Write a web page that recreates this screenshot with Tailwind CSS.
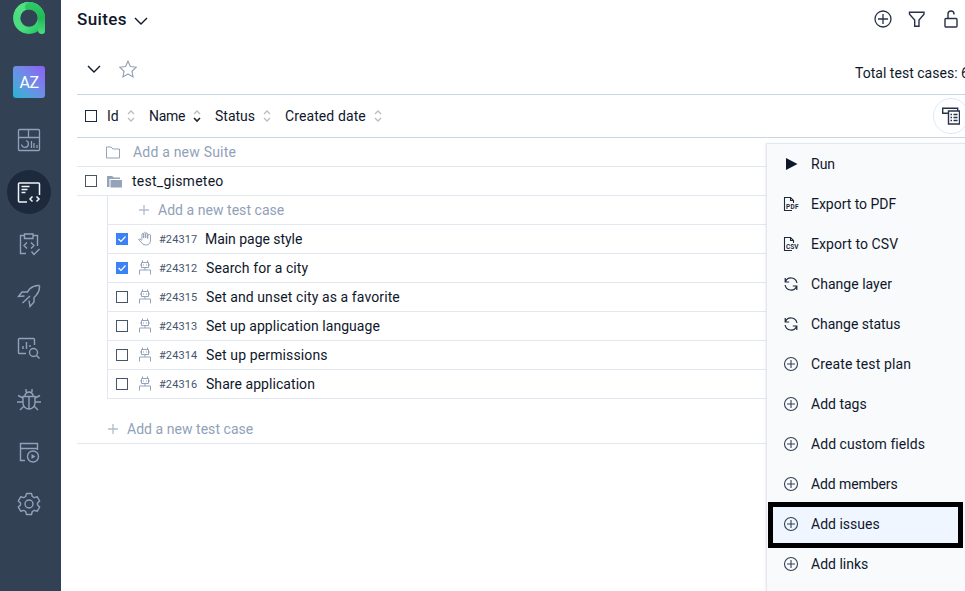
<!DOCTYPE html>
<html lang="en">
<head>
<meta charset="utf-8">
<title>Suites</title>
<script src="https://cdn.jsdelivr.net/npm/@tailwindcss/browser@4"></script>
</head>
<body class="relative flex h-[591px] w-[965px] overflow-hidden bg-white font-[Roboto,sans-serif] text-[14px] text-slate-900">
<svg class="hidden">
  <symbol id="sort" viewBox="0 0 10 14" fill="none"><path d="M2 5l3-3 3 3M2 9l3 3 3-3" stroke="#bcbcbc" stroke-width="1.3"/></symbol>
  <symbol id="sort-desc" viewBox="0 0 10 14" fill="none"><path d="M2 5l3-3 3 3" stroke="#bcbcbc" stroke-width="1.3"/><path d="M2 9l3 3 3-3" stroke="#222" stroke-width="1.6"/></symbol>
  <symbol id="plus" viewBox="0 0 10 10" fill="none"><path d="M0 5h10M5 0v10" stroke="#b4bfce" stroke-width="1.4"/></symbol>
  <symbol id="add" viewBox="0 0 16 16" fill="none"><circle cx="8" cy="8" r="6.500" stroke="#334155" stroke-width="1.100"/><path d="M4 8h8M8 4v8" stroke="#334155" stroke-width="1.100"/></symbol>
  <symbol id="robot" viewBox="0 0 14 15" fill="none"><path d="M1.500 14.500v-4.500h11v4.500M3.500 2.500h7v5h-7zM4.500 0.500v2M9.500 0.500v2M7 7.500v2.500M2 5h1.500M10.500 5h1.500" stroke="#94a3b8"/><path d="M5 5h1M8 5h1" stroke="#94a3b8" stroke-width="1.200"/></symbol>
  <symbol id="sync" viewBox="0 0 16 16" fill="none"><path d="M2.200 2v4h4M13.800 14v-4h-4M2.500 5.500a6 6 0 0 1 11.400 1.500M13.500 10.500a6 6 0 0 1-11.400-1.500" stroke="#1e293b" stroke-width="1.200"/></symbol>
  <symbol id="chev" viewBox="0 0 14 8" fill="none"><path d="M1 1l6 6 6-6" stroke="#0f172a" stroke-width="1.400"/></symbol>
  <symbol id="file" viewBox="0 0 16 16" fill="none"><path d="M9 14.500H1.500v-13h6l3 3V7M7.500 1.500v3h3" stroke="#1e293b" stroke-width="1.100"/></symbol>
</svg>

<aside class="flex w-[61px] shrink-0 flex-col bg-[#334155] pl-[13px]">
  <svg class="mt-px h-[34px] w-8" viewBox="0 0 32 34" fill="none">
    <defs>
      <linearGradient id="lg" x1="0" y1="0" x2="1" y2="1"><stop stop-color="#4ade80"/><stop offset=".6" stop-color="#4ade80"/><stop offset="1" stop-color="#22c55e"/></linearGradient>
      <linearGradient id="lt" x1="0" y1="0" x2="0" y2="1"><stop stop-color="#2fcb66"/><stop offset=".5" stop-color="#22b858"/><stop offset="1" stop-color="#4ade80"/></linearGradient>
    </defs>
    <circle cx="16" cy="17" r="12.300" stroke="url(#lg)" stroke-width="7.200"/>
    <path d="M16 1.100a16 16 0 0 1 16 16V30q0 3-3 3-4 0-4-4V17a9 9 0 0 0-12-8Q10 3 16 1.100" fill="url(#lt)"/>
    <path d="M2 9Q7 1 16 1.100 9 4 12 9 8 11 7.500 16 3 13 2 9" fill="#52df82"/>
  </svg>
  <div class="mt-[31px] flex size-8 items-center justify-center rounded-[3px] bg-linear-to-tr from-[#06b6d4] to-[#8b5cf6] pt-0.5 text-[16px] tracking-[-0.5px] text-white">AZ</div>
  <nav class="mt-4 -ml-[6px] flex w-11 flex-col items-center text-slate-400">
    <div class="flex h-[52px] items-center"><svg class="size-6" viewBox="0 0 24 24" fill="none" stroke="currentColor" stroke-width="1.300"><rect x="1.500" y="1.500" width="21" height="21" rx="1"/><path d="M1.500 9.500h21M11.500 1.500v8M14.500 20v-7M17 20v-5M20 20v-3"/><path d="M9 12.500a3.500 3.500 0 1 1-4.500 4"/></svg></div>
    <div class="flex h-[52px] items-center"><div class="flex size-11 items-center justify-center rounded-full bg-slate-800 text-slate-100"><svg class="size-6" viewBox="0 0 24 24" fill="none" stroke="currentColor" stroke-width="1.500"><path d="M22.500 15V4a1 1 0 0 0-1-1h-19a1 1 0 0 0-1 1v17a1 1 0 0 0 1 1H10M4.500 6.500h8M4.500 9.500h6M4.500 12.500h4M15.500 16.500L13 19l2.500 2.500M19.500 16.500L22 19l-2.500 2.500"/></svg></div></div>
    <div class="flex h-[52px] items-center"><svg class="size-6" viewBox="0 0 24 24" fill="none" stroke="currentColor" stroke-width="1.400"><path d="M8 3.500H3.500V21.500H9M16 3.500h4.500V14M7.500 2h8.500v4.500H7.500zM10 10.500L7 13.500l3 3M14 10.500l3 3-3 3M14.500 19.500l2.500 3 5.500-5.500"/></svg></div>
    <div class="flex h-[52px] items-center"><svg class="size-6" viewBox="0 0 24 24" fill="none" stroke="currentColor" stroke-width="1.400"><path d="M22.500 1.500Q17 1 12.500 5L10.500 8H5l-3.500 4.500 6-.500M22.500 1.500Q23 7 19 11.500l-2 2V18l-4 4.500-1-6M13 12L5.500 19"/></svg></div>
    <div class="flex h-[52px] items-center"><svg class="size-6" viewBox="0 0 24 24" fill="none" stroke="currentColor" stroke-width="1.400"><path d="M9 17.500H2.500a1 1 0 0 1-1-1v-13a1 1 0 0 1 1-1h14a1 1 0 0 1 1 1V9M6 13V10M9.500 13V6M13 11V9"/><circle cx="16.500" cy="16.500" r="4"/><path d="M19.500 19.500l3 3"/></svg></div>
    <div class="flex h-[52px] items-center"><svg class="size-6" viewBox="0 0 24 24" fill="none" stroke="currentColor" stroke-width="1.400"><path d="M6 8.500h12V15a6 6 0 0 1-12 0zM8 8.500V7q1-3 4-3t4 3v1.500M12 9v12M9 4V1M15 4V1M6 10L1 7.500M18 10l5-2.500M6 14H0M18 14h6M7 18l-4 4M17 18l4 4"/></svg></div>
    <div class="flex h-[52px] items-center"><svg class="size-6" viewBox="0 0 24 24" fill="none" stroke="currentColor" stroke-width="1.400"><path d="M8 20.500H3.500v-17h17v5h-17M20.500 8.500V10"/><circle cx="16" cy="16.500" r="5.500"/><path d="M14.500 14l4 2.500-4 2.500z" fill="currentColor" stroke="none"/></svg></div>
    <div class="flex h-[52px] items-center"><svg class="size-6" viewBox="0 0 24 24" fill="none" stroke="currentColor" stroke-width="1.400" stroke-linejoin="round"><circle cx="12" cy="12" r="4"/><path d="M9.500 1.500h5l.8 3 2 1.100 3-.8 2.400 4.200-2.200 2v2l2.200 2-2.400 4.200-3-.8-2 1.100-.8 3h-5l-.8-3-2-1.100-3 .8L1.300 15l2.200-2v-2L1.300 9l2.400-4.200 3 .8 2-1.100z"/></svg></div>
  </nav>
</aside>

<main class="flex w-[904px] shrink-0 flex-col pl-4">
  <header class="flex h-[39px] items-center">
    <h1 class="w-[57px] text-[17px] font-medium tracking-[0.4px]">Suites</h1>
    <svg class="mt-0.5 h-[8px] w-[14px]"><use href="#chev"/></svg>
    <div class="ml-auto flex items-center gap-4 pr-[5px] pb-px">
      <svg class="size-[18px]" viewBox="0 0 18 18" fill="none" stroke="#273248" stroke-width="1.300"><circle cx="9" cy="9" r="8"/><path d="M4 9h10M9 4v10"/></svg>
      <svg class="size-[18px]" viewBox="0 0 18 18" fill="none" stroke="#273248" stroke-width="1.400"><path d="M1.500 2.200h14.500v2l-5 5.800v6.300H6.700V10L1.500 4.200z"/></svg>
      <svg class="size-[18px]" viewBox="0 0 18 18" fill="none" stroke="#273248" stroke-width="1.400"><rect x="3" y="8.500" width="12" height="8.500" rx="1"/><path d="M6 8.500V4a3 3 0 0 1 6 0v.5"/></svg>
    </div>
  </header>
  <div class="flex h-[55px] items-center pt-[4px]">
    <svg class="ml-[10px] h-[8px] w-[14px] shrink-0"><use href="#chev"/></svg>
    <svg class="ml-[18px] size-[18px] shrink-0" viewBox="0 0 18 18" fill="none" stroke="#94a3b8" stroke-width="1.200"><path d="M9 1.200l2.400 5.300 5.800.7-4.200 4 1 5.700L9 14l-5 2.900 1-5.700-4.200-4 5.800-.7z"/></svg>
    <p class="ml-[718px] mt-[9px] shrink-0 whitespace-nowrap tracking-[0.02px]">Total test cases: 6</p>
  </div>
  <div class="flex h-[44px] shrink-0 items-center border-y border-slate-300 pl-2">
    <span class="size-3 border border-slate-800"></span>
    <span class="ml-[10px] w-[18px]">Id</span><svg class="ml-px h-[14px] w-[10px]"><use href="#sort"/></svg>
    <span class="ml-[13px] w-[42px] tracking-[-0.3px]">Name</span><svg class="ml-px h-[14px] w-[10px]"><use href="#sort-desc"/></svg>
    <span class="ml-[13px] w-[46px]">Status</span><svg class="ml-px h-[14px] w-[10px]"><use href="#sort"/></svg>
    <span class="ml-[13px] w-[87px] whitespace-nowrap tracking-[0.1px]">Created date</span><svg class="ml-px h-[14px] w-[10px]"><use href="#sort"/></svg>
    <div class="ml-auto -mr-[4px] flex size-9 shrink-0 items-center justify-center rounded-full border-[1.5px] border-[#dbeafe]">
      <svg class="size-[18px]" viewBox="0 0 18 18" fill="none" stroke="#273248" stroke-width="1.400"><path d="M6 6.300H.7V1.200h15v3M6.500 4h11v13h-11zM8.500 7.500h1.500M11.500 7.500h4M8.500 10.500h1.500M11.500 10.500h4M8.500 13.500h1.500M11.500 13.500h4"/></svg>
    </div>
  </div>
  <div class="flex h-[29px] shrink-0 items-center border-b border-slate-200 pl-[29px] text-slate-400">
    <svg class="h-[13px] w-[14px]" viewBox="0 0 14 13" fill="none" stroke="#94a3b8"><path d="M.5 12V1h4.500l2 2h6.500v9z"/></svg>
    <span class="ml-[13px] pt-px tracking-[0.2px]">Add a new Suite</span>
  </div>
  <div class="flex h-[29px] shrink-0 items-center border-b border-slate-200 pl-2">
    <span class="size-3 border border-slate-600"></span>
    <svg class="ml-[10px] h-[13px] w-[15px]" viewBox="0 0 15 13" fill="#94a3b8"><path d="M0 12V1h5l2 1.500h6V4H2.500v8zM3.500 5H15v7.500H3.500z"/></svg>
    <span class="ml-[10px] tracking-[0.25px]">test_gismeteo</span>
  </div>
  <div class="ml-[30px] border-l border-slate-200">
    <div class="flex h-[29px] items-center border-b border-slate-200 pl-[31px] text-slate-400"><svg class="size-[10px]"><use href="#plus"/></svg><span class="ml-[9px] tracking-[0.04px]">Add a new test case</span></div>
    <div class="flex h-[29px] items-center border-b border-slate-200 pl-2"><svg class="size-3 bg-[#3b82f6]" viewBox="0 0 12 12" fill="none" stroke="#fff" stroke-width="1.200"><path d="M2.500 6L5 8.500l4.500-5"/></svg><svg class="ml-[10px] mb-0.5 h-[15px] w-[14px]" viewBox="0 0 14 15" fill="none" stroke="#94a3b8"><path d="M4 8.500V3q.7-1.200 1.700 0V7V2q1-1.500 2 0V7V2.500q1-1.200 2 0V7.500V4q1.500-1 2.800 0V9q0 5-5 5-3 0-4.500-3L.5 8.500q1.200-1.500 3.500 1"/></svg><span class="ml-[7px] w-[47px] pt-0.5 text-[11px] tracking-[0.1px] text-slate-600">#24317</span><span class="-ml-px tracking-[-0.04px]">Main page style</span></div>
    <div class="flex h-[29px] items-center border-b border-slate-200 pl-2"><svg class="size-3 bg-[#3b82f6]" viewBox="0 0 12 12" fill="none" stroke="#fff" stroke-width="1.200"><path d="M2.500 6L5 8.500l4.500-5"/></svg><svg class="ml-[10px] mb-0.5 h-[15px] w-[14px]"><use href="#robot"/></svg><span class="ml-[7px] w-[47px] pt-0.5 text-[11px] tracking-[0.1px] text-slate-600">#24312</span><span class="tracking-[0.1px]">Search for a city</span></div>
    <div class="flex h-[29px] items-center border-b border-slate-200 pl-2"><span class="size-3 border border-slate-600"></span><svg class="ml-[10px] mb-0.5 h-[15px] w-[14px]"><use href="#robot"/></svg><span class="ml-[7px] w-[47px] pt-0.5 text-[11px] tracking-[0.1px] text-slate-600">#24315</span><span class="tracking-[0.1px]">Set and unset city as a favorite</span></div>
    <div class="flex h-[29px] items-center border-b border-slate-200 pl-2"><span class="size-3 border border-slate-600"></span><svg class="ml-[10px] mb-0.5 h-[15px] w-[14px]"><use href="#robot"/></svg><span class="ml-[7px] w-[47px] pt-0.5 text-[11px] tracking-[0.1px] text-slate-600">#24313</span><span class="tracking-[0.06px]">Set up application language</span></div>
    <div class="flex h-[29px] items-center border-b border-slate-200 pl-2"><span class="size-3 border border-slate-600"></span><svg class="ml-[10px] mb-0.5 h-[15px] w-[14px]"><use href="#robot"/></svg><span class="ml-[7px] w-[47px] pt-0.5 text-[11px] tracking-[0.1px] text-slate-600">#24314</span><span class="tracking-[0.13px]">Set up permissions</span></div>
    <div class="flex h-[29px] items-center border-b border-slate-200 pl-2"><span class="size-3 border border-slate-600"></span><svg class="ml-[10px] mb-0.5 h-[15px] w-[14px]"><use href="#robot"/></svg><span class="ml-[7px] w-[47px] pt-0.5 text-[11px] tracking-[0.1px] text-slate-600">#24316</span><span class="tracking-[0.06px]">Share application</span></div>
  </div>
  <div class="flex h-[45px] shrink-0 items-center border-b border-slate-200 pl-[31px] pt-4 text-slate-400"><svg class="size-[10px]"><use href="#plus"/></svg><span class="ml-[9px] tracking-[0.04px]">Add a new test case</span></div>
</main>

<div class="absolute left-[766px] top-[143px] flex h-[460px] w-[210px] flex-col border border-slate-200 bg-slate-50 shadow-sm">
  <div class="flex h-10 items-center gap-3 pl-4"><svg class="size-4" viewBox="0 0 16 16" fill="#0f172a"><path d="M3 2l11.500 6L3 14z"/></svg><span>Run</span></div>
  <div class="flex h-10 items-center gap-3 pl-4"><svg class="size-4" viewBox="0 0 16 16" fill="none"><use href="#file"/><text x="3" y="13" font-size="6.500" font-weight="700" textLength="12.500" fill="#1e293b">PDF</text></svg><span class="tracking-[-0.03px]">Export to PDF</span></div>
  <div class="flex h-10 items-center gap-3 pl-4"><svg class="size-4" viewBox="0 0 16 16" fill="none"><use href="#file"/><text x="3" y="13" font-size="6.500" font-weight="700" textLength="12.500" fill="#1e293b">CSV</text></svg><span class="tracking-[0.08px]">Export to CSV</span></div>
  <div class="flex h-10 items-center gap-3 pl-4"><svg class="size-4"><use href="#sync"/></svg><span class="tracking-[0.03px]">Change layer</span></div>
  <div class="flex h-10 items-center gap-3 pl-4"><svg class="size-4"><use href="#sync"/></svg><span class="-tracking-[0.03px]">Change status</span></div>
  <div class="flex h-10 items-center gap-3 pl-4"><svg class="size-4"><use href="#add"/></svg><span class="tracking-[0.12px]">Create test plan</span></div>
  <div class="flex h-10 items-center gap-3 pl-4"><svg class="size-4"><use href="#add"/></svg><span>Add tags</span></div>
  <div class="flex h-10 items-center gap-3 pl-4"><svg class="size-4"><use href="#add"/></svg><span class="tracking-[0.05px]">Add custom fields</span></div>
  <div class="flex h-10 items-center gap-3 pl-4"><svg class="size-4"><use href="#add"/></svg><span class="tracking-[-0.1px]">Add members</span></div>
  <div class="-mb-1 -mt-0.5 ml-px flex h-[46px] w-[195px] shrink-0 items-center gap-3 border-[5px] border-black bg-[#eff6ff] pb-0.5 pl-[10px]"><svg class="size-4"><use href="#add"/></svg><span>Add issues</span></div>
  <div class="flex h-10 items-center gap-3 pl-4"><svg class="size-4"><use href="#add"/></svg><span>Add links</span></div>
</div>
</body>
</html>
